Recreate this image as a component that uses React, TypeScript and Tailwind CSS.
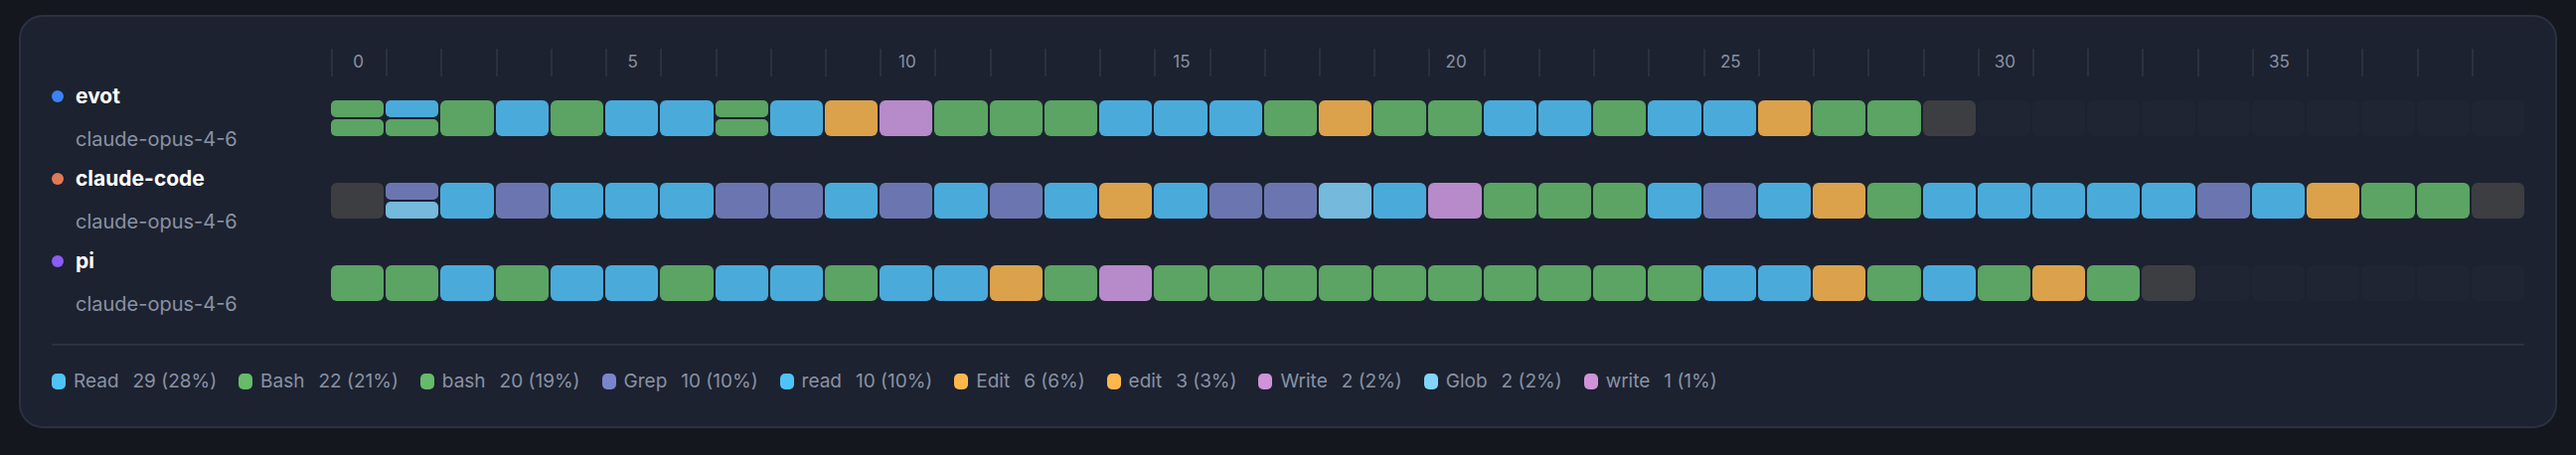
const C: Record<string, string> = {
  g: "bg-[#5ba463]",
  b: "bg-[#4aabdb]",
  p: "bg-[#6b76b1]",
  o: "bg-[#dba24b]",
  k: "bg-[#b78ac9]",
  l: "bg-[#75b9dd]",
  d: "bg-[#3d3e42]",
  e: "bg-[#1f2532]",
};

// "gg" means a split cell (top/bottom)
const rows = [
  {
    name: "evot",
    dot: "bg-[#3b82f6]",
    cells:
      "gg bg g b g b b gg b o k g g g b b b g o g g b b g b b o g g d e e e e e e e e e e".split(" "),
  },
  {
    name: "claude-code",
    dot: "bg-[#e07a55]",
    cells:
      "d pl b p b b b p p b p b p b o b p p l b k g g g b p b o g b b b b b p b o g g d".split(" "),
  },
  {
    name: "pi",
    dot: "bg-[#8b5cf6]",
    cells:
      "g g b g b b g b b g b b o g k g g g g g g g g g g b b o g b g o g d e e e e e e".split(" "),
  },
];

const legend = [
  { c: "bg-[#4fc3f7]", n: "Read", v: "29 (28%)" },
  { c: "bg-[#66bb6a]", n: "Bash", v: "22 (21%)" },
  { c: "bg-[#66bb6a]", n: "bash", v: "20 (19%)" },
  { c: "bg-[#7986cb]", n: "Grep", v: "10 (10%)" },
  { c: "bg-[#4fc3f7]", n: "read", v: "10 (10%)" },
  { c: "bg-[#ffb74d]", n: "Edit", v: "6 (6%)" },
  { c: "bg-[#ffb74d]", n: "edit", v: "3 (3%)" },
  { c: "bg-[#ce93d8]", n: "Write", v: "2 (2%)" },
  { c: "bg-[#81d4fa]", n: "Glob", v: "2 (2%)" },
  { c: "bg-[#ce93d8]", n: "write", v: "1 (1%)" },
];

function Cell({ code }: { code: string }) {
  if (code.length === 2) {
    return (
      <div className="flex flex-col gap-[2px] h-[36px]">
        <div className={`flex-1 rounded-[5px] ${C[code[0]]}`} />
        <div className={`flex-1 rounded-[5px] ${C[code[1]]}`} />
      </div>
    );
  }
  return <div className={`h-[36px] rounded-[6px] ${C[code]}`} />;
}

export default function App() {
  return (
    <div
      className="bg-[#14171e] w-[2592px] h-[458px] pt-[15px] pl-[19px]"
      style={{ fontFamily: "Inter, 'Noto Sans', sans-serif" }}
    >
      <div className="w-[2554px] h-[416px] rounded-[24px] border-2 border-[#2a3242] bg-[#1c2230] px-[31px] pt-[32px]">
        {/* tick header */}
        <div className="flex">
          <div className="w-[281px] shrink-0" />
          <div className="grid grid-cols-[repeat(40,minmax(0,1fr))] gap-x-[2px] w-[2208px]">
            {Array.from({ length: 40 }, (_, i) => (
              <div
                key={i}
                className="h-[28px] border-l-2 border-[#2a3140] flex items-center justify-center text-[17px] text-[#8a92a4]"
              >
                {i % 5 === 0 ? i : ""}
              </div>
            ))}
          </div>
        </div>

        {rows.map((r) => (
          <div key={r.name} className="flex items-center h-[83px]">
            <div className="w-[281px] shrink-0 flex flex-col gap-[15px]">
              <div className="flex items-center gap-[12px] h-[28px]">
                <span className={`w-[12px] h-[12px] rounded-full ${r.dot}`} />
                <span className="text-[21px] font-bold text-white">{r.name}</span>
              </div>
              <div className="pl-[24px] h-[28px] leading-[28px] text-[20px] text-[#8a92a4]">
                claude-opus-4-6
              </div>
            </div>
            <div className="grid grid-cols-[repeat(40,minmax(0,1fr))] gap-x-[2px] w-[2208px]">
              {r.cells.map((c, i) => (
                <Cell key={i} code={c} />
              ))}
            </div>
          </div>
        ))}

        <div className="mt-[20px] h-[2px] bg-[#2a3242]" />

        <div className="flex items-center gap-[22px] h-[28px] mt-[22px]">
          {legend.map((l) => (
            <div key={l.n} className="flex items-center gap-[8px] text-[19px] text-[#8a92a4]">
              <span className={`w-[14px] h-[16px] rounded-[5px] ${l.c}`} />
              <span>{l.n}</span>
              <span className="ml-[6px]">{l.v}</span>
            </div>
          ))}
        </div>
      </div>
    </div>
  );
}
